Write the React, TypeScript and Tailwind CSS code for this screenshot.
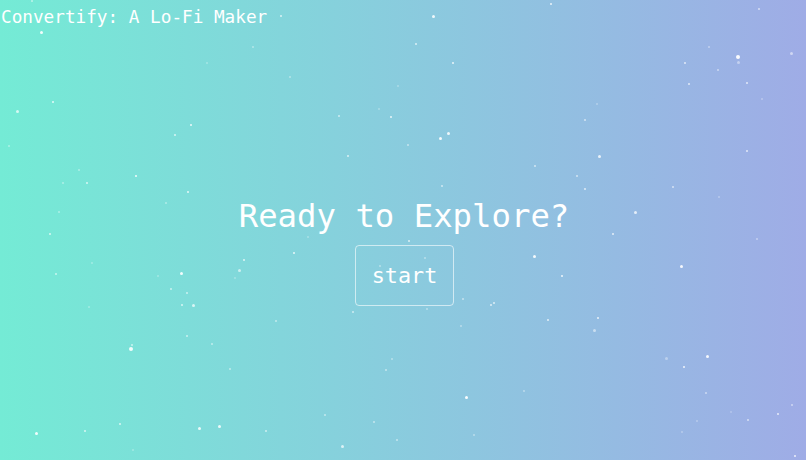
const stars: [number, number, number, number][] = [
  // x, y, size, opacity
  [41, 32, 3, 0.9], [53, 102, 2.5, 0.8], [17, 111, 3, 0.7], [9, 146, 2, 0.4],
  [191, 125, 2.5, 0.85], [175, 135, 2.5, 0.7], [136, 176, 2.5, 0.9], [87, 183, 2.5, 0.7],
  [188, 192, 2.5, 0.8], [166, 203, 2, 0.4], [59, 212, 2, 0.4], [253, 47, 2, 0.4],
  [207, 63, 2, 0.3], [79, 170, 1.5, 0.4], [63, 183, 1.5, 0.4], [32, 1, 2, 0.5],
  [433, 16, 3, 0.85], [281, 16, 2, 0.7], [416, 44, 2.5, 0.7], [453, 63, 2.5, 0.8],
  [290, 77, 2, 0.4], [398, 86, 2, 0.3], [339, 116, 1.5, 0.6], [391, 117, 2.5, 0.8],
  [440, 138, 3, 0.9], [448, 133, 3, 0.85], [408, 145, 2.5, 0.5], [348, 156, 2.5, 0.7],
  [442, 186, 2.5, 0.6], [535, 166, 2, 0.6], [379, 109, 1.5, 0.3],
  [551, 4, 2.5, 0.8], [759, 9, 2, 0.6], [709, 47, 2, 0.4], [738, 57, 4, 0.95],
  [738, 62, 3, 0.4], [685, 63, 2.5, 0.7], [791, 53, 3, 0.5], [718, 70, 1.5, 0.5],
  [689, 84, 2.5, 0.7], [747, 83, 2, 0.7], [762, 99, 2, 0.3], [597, 104, 2.5, 0.3],
  [585, 120, 1.5, 0.6], [747, 151, 2, 0.7], [599, 156, 3, 0.8], [577, 176, 2.5, 0.6],
  [585, 189, 2, 0.7], [673, 187, 2, 0.6], [719, 197, 2, 0.3], [635, 212, 3, 0.75],
  [50, 234, 2, 0.7], [92, 263, 2, 0.3], [56, 274, 2.5, 0.6], [89, 307, 2, 0.3],
  [158, 276, 2, 0.3], [181, 273, 3, 0.9], [244, 260, 2, 0.75], [239, 270, 3, 0.6],
  [235, 278, 2, 0.3], [171, 289, 2.5, 0.6], [187, 293, 1.5, 0.6], [182, 305, 2, 0.7],
  [193, 305, 3, 0.7], [187, 336, 2, 0.6], [212, 344, 2, 0.5], [131, 349, 3.5, 0.9],
  [132, 345, 1.5, 0.6], [230, 369, 1.5, 0.5], [120, 424, 2.5, 0.7], [36, 433, 3, 0.9],
  [85, 431, 2.5, 0.7], [199, 428, 3, 0.85], [219, 426, 3, 0.85], [266, 431, 1.5, 0.6],
  [133, 450, 2, 0.3],
  [409, 241, 2.5, 0.7], [294, 253, 2.5, 0.8], [308, 237, 2, 0.3], [380, 266, 2.5, 0.4],
  [425, 258, 1.5, 0.4], [534, 256, 3, 0.9], [353, 312, 1.5, 0.6], [427, 309, 2, 0.4],
  [463, 299, 1.5, 0.5], [491, 305, 2.5, 0.7], [494, 303, 2.5, 0.7], [276, 321, 1.5, 0.5],
  [461, 326, 1.5, 0.4], [386, 370, 2.5, 0.5], [392, 359, 1.5, 0.4], [466, 397, 3, 0.95],
  [524, 391, 1.5, 0.4], [325, 415, 2.5, 0.5], [374, 422, 2, 0.5], [397, 440, 2, 0.5],
  [342, 446, 3, 0.7], [474, 435, 1.5, 0.4],
  [613, 234, 2.5, 0.75], [757, 239, 2.5, 0.4], [562, 276, 2.5, 0.85], [681, 266, 3, 0.9],
  [548, 320, 2.5, 0.75], [598, 318, 2.5, 0.8], [594, 330, 3, 0.5], [666, 358, 3, 0.35],
  [707, 356, 3, 0.9], [684, 367, 2.5, 0.85], [706, 393, 1.5, 0.5], [697, 421, 2.5, 0.3],
  [748, 420, 1.5, 0.6], [778, 414, 2, 0.75], [792, 405, 1.5, 0.5], [682, 432, 2, 0.3],
  [795, 456, 2.5, 0.8], [731, 412, 2, 0.25],
];

export default function App() {
  return (
    <div
      className="relative h-[460px] w-full overflow-hidden bg-[linear-gradient(to_right,#74ebd5,#9face6)] text-white"
      style={{ fontFamily: '"DejaVu Sans Mono", "Liberation Mono", monospace' }}
    >
      {stars.map(([x, y, s, o], i) => (
        <span
          key={i}
          className="absolute rounded-full bg-white"
          style={{ left: x - s / 2, top: y - s / 2, width: s, height: s, opacity: o }}
        />
      ))}

      <div className="relative flex h-full flex-col">
        <h1 className="pl-px pt-[4px] text-[17.7px] leading-[26px]">Convertify: A Lo-Fi Maker</h1>

        <div className="mt-[162px] flex flex-col items-center">
          <h2 className="pl-[2px] text-[32.3px] leading-[48px]">Ready to Explore?</h2>
          <button className="ml-[3px] mt-[5px] rounded-[4px] border border-white/60 px-[16px] py-[13px] text-[21.8px] leading-[33px]">
            start
          </button>
        </div>
      </div>
    </div>
  );
}
